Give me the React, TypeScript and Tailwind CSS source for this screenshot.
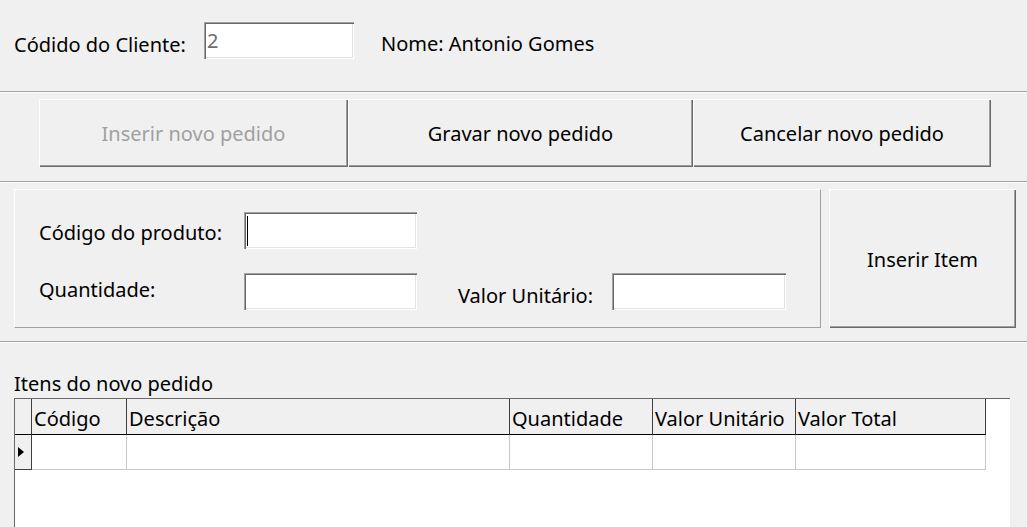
import React from 'react';

const raised =
  'bg-[#f0f0f0] shadow-[inset_1px_1px_0_#ffffff,inset_-1px_-1px_0_#696969,inset_-2px_-2px_0_#a0a0a0]';
const sunken =
  'bg-white shadow-[inset_1px_1px_0_#a0a0a0,inset_2px_2px_0_#696969,inset_-1px_-1px_0_#ffffff,inset_-2px_-2px_0_#e3e3e3]';

function Separator() {
  return <div className="h-[2px] border-t border-[#a0a0a0] bg-white" />;
}

function Field({ width, value, caret }: { width: number; value?: string; caret?: boolean }) {
  return (
    <div
      className={`${sunken} h-[37px] flex items-center pl-[3px] text-[#6d6d6d]`}
      style={{ width }}
    >
      {caret && <div className="h-[30px] w-px bg-black" />}
      {value}
    </div>
  );
}

interface Column {
  title: string;
  width: number;
}

const columns: Column[] = [
  { title: 'Código', width: 95 },
  { title: 'Descrição', width: 383 },
  { title: 'Quantidade', width: 143 },
  { title: 'Valor Unitário', width: 143 },
  { title: 'Valor Total', width: 190 },
];

export default function App() {
  return (
    <div className="w-[1027px] h-[527px] overflow-hidden bg-[#f0f0f0] text-black font-['Noto_Sans',sans-serif] text-[20px]">
      {/* cliente */}
      <div className="h-[91px] pt-[22px]">
        <div className="flex h-[37px] items-center">
          <span className="ml-[14px] w-[190px] mt-[8px]">Códido do Cliente:</span>
          <Field width={150} value="2" />
          <span className="ml-[27px] mt-[6px]">Nome: Antonio Gomes</span>
        </div>
      </div>
      <Separator />

      {/* ações do pedido */}
      <div className="flex pl-[39px] pt-[6px] pb-[14px]">
        <button className={`${raised} h-[68px] w-[309px] pt-[2px] text-[#a0a0a0]`}>Inserir novo pedido</button>
        <button className={`${raised} h-[68px] w-[345px] pt-[2px]`}>Gravar novo pedido</button>
        <button className={`${raised} h-[68px] w-[298px] pt-[2px]`}>Cancelar novo pedido</button>
      </div>
      <Separator />

      {/* item */}
      <div className="flex pl-[14px] pt-[6px] pb-[13px]">
        <div className="h-[139px] w-[807px] border border-white border-r-[#a0a0a0] border-b-[#a0a0a0] pt-[22px] pl-[24px]">
          <div className="flex h-[37px] items-center">
            <span className="w-[205px] mt-[4px]">Código do produto:</span>
            <Field width={173} caret />
          </div>
          <div className="mt-[24px] flex h-[37px] items-center">
            <span className="w-[205px] mb-[4px]">Quantidade:</span>
            <Field width={173} />
            <span className="ml-[41px] w-[154px] mt-[8px]">Valor Unitário:</span>
            <Field width={174} />
          </div>
        </div>
        <button className={`${raised} ml-[8px] h-[139px] w-[187px] pt-[3px]`}>Inserir Item</button>
      </div>
      <Separator />

      {/* itens do pedido */}
      <div className="flex h-[55px] items-end pl-[14px] pb-[4px] leading-none">Itens do novo pedido</div>
      <div className="ml-[14px] h-[129px] w-[996px] border-l border-t border-[#696969] bg-white">
        <div className="flex h-[36px]">
          <div className="w-[17px] border-r border-b border-r-[#404040] border-b-black bg-[#f0f0f0]" />
          {columns.map((col) => (
            <div
              key={col.title}
              className="flex items-end border-r border-b border-r-[#404040] border-b-black bg-[#f0f0f0] pl-[2px] pb-[5px] leading-none"
              style={{ width: col.width }}
            >
              {col.title}
            </div>
          ))}
        </div>
        <div className="flex h-[35px]">
          <div className="flex w-[17px] items-center border-r border-b border-[#404040] bg-[#f0f0f0] pl-[3px]">
            <svg width="6" height="10" viewBox="0 0 6 10">
              <path d="M0 0 L6 5 L0 10 Z" fill="#000" />
            </svg>
          </div>
          {columns.map((col) => (
            <div
              key={col.title}
              className="border-r border-b border-[#c8c8c8]"
              style={{ width: col.width }}
            />
          ))}
        </div>
      </div>
    </div>
  );
}
